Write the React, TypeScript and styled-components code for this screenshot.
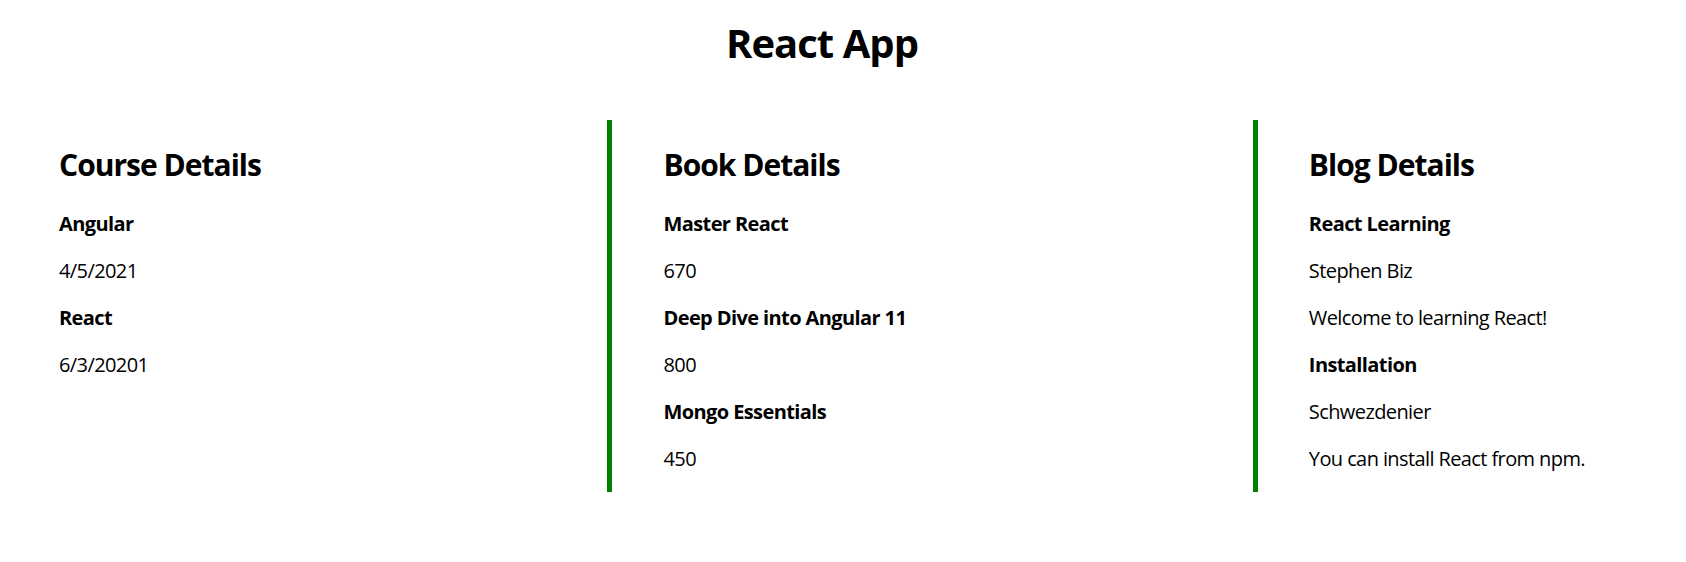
import React from "react";
import styled, { createGlobalStyle } from "styled-components";

const GlobalStyle = createGlobalStyle`
  body {
    margin: 8px;
    background: #ffffff;
    color: #000000;
    font-family: "Open Sans", "Noto Sans", Arial, sans-serif;
  }
`;

const Page = styled.div`
  width: 1628px;
`;

const Title = styled.h1`
  margin: 8px 0 50px;
  font-size: 40px;
  line-height: 54px;
  font-weight: 700;
  letter-spacing: -0.024em;
  text-align: center;
`;

const Row = styled.div`
  display: flex;
  justify-content: space-between;
  align-items: flex-start;
`;

const Column = styled.section<{ $divided?: boolean }>`
  padding: 0 51px;
  border-left: ${(p) => (p.$divided ? "5px solid green" : "none")};
`;

const Heading = styled.h2`
  margin: 25px 0;
  font-size: 30px;
  line-height: 40px;
  font-weight: 700;
  letter-spacing: -0.033em;
`;

const Line = styled.p<{ $bold?: boolean }>`
  margin: 20px 0;
  font-size: 20px;
  line-height: 27px;
  font-weight: ${(p) => (p.$bold ? 700 : 400)};
  letter-spacing: -0.03em;
  white-space: nowrap;
`;

const courses = [
  { name: "Angular", date: "4/5/2021" },
  { name: "React", date: "6/3/20201" },
];

const books = [
  { name: "Master React", price: 670 },
  { name: "Deep Dive into Angular 11", price: 800 },
  { name: "Mongo Essentials", price: 450 },
];

const blogs = [
  { title: "React Learning", author: "Stephen Biz", text: "Welcome to learning React!" },
  { title: "Installation", author: "Schwezdenier", text: "You can install React from npm." },
];

export default function App() {
  return (
    <>
      <GlobalStyle />
      <Page>
        <Title>React App</Title>
        <Row>
          <Column>
            <Heading>Course Details</Heading>
            {courses.map((c) => (
              <React.Fragment key={c.name}>
                <Line $bold>{c.name}</Line>
                <Line>{c.date}</Line>
              </React.Fragment>
            ))}
          </Column>
          <Column $divided>
            <Heading>Book Details</Heading>
            {books.map((b) => (
              <React.Fragment key={b.name}>
                <Line $bold>{b.name}</Line>
                <Line>{b.price}</Line>
              </React.Fragment>
            ))}
          </Column>
          <Column $divided>
            <Heading>Blog Details</Heading>
            {blogs.map((b) => (
              <React.Fragment key={b.title}>
                <Line $bold>{b.title}</Line>
                <Line>{b.author}</Line>
                <Line>{b.text}</Line>
              </React.Fragment>
            ))}
          </Column>
        </Row>
      </Page>
    </>
  );
}
